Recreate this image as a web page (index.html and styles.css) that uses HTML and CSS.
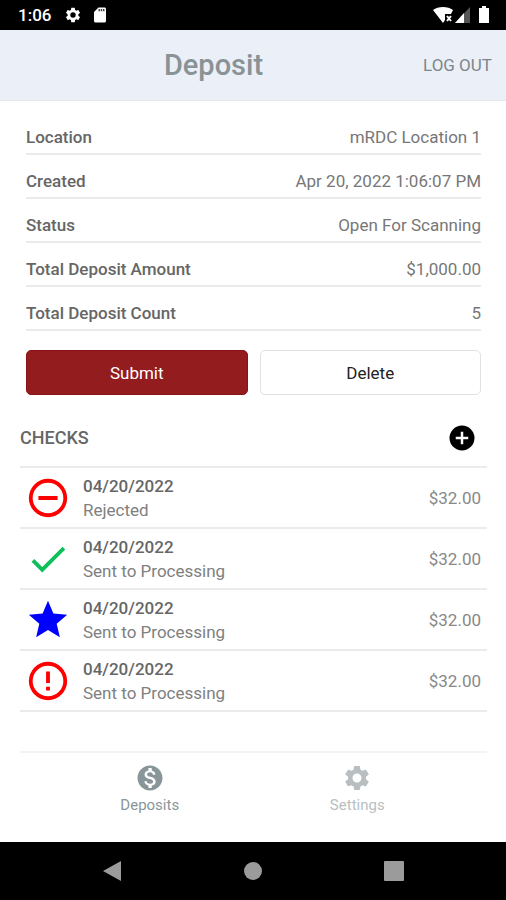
FILE: index.html
```
<!DOCTYPE html>
<html lang="en">
<head>
    <meta charset="UTF-8">
    <meta name="viewport" content="width=device-width, initial-scale=1.0">
    <title>Deposit</title>
    <link rel="stylesheet" href="styles.css">
</head>
<body>
    <div class="status-bar">
        <span class="clock">1:06</span>
        <svg class="gear" width="18" height="18" viewBox="0 0 24 24" fill="currentColor"><path d="M19.14 12.94c.04-.3.06-.61.06-.94 0-.32-.02-.64-.07-.94l2.03-1.58a.49.49 0 0 0 .12-.61l-1.92-3.32a.49.49 0 0 0-.59-.22l-2.39.96c-.5-.38-1.03-.7-1.62-.94l-.36-2.54a.48.48 0 0 0-.48-.41h-3.84c-.24 0-.43.17-.47.41l-.36 2.54c-.59.24-1.13.57-1.62.94l-2.39-.96a.48.48 0 0 0-.59.22L2.74 8.87c-.12.21-.08.47.12.61l2.03 1.58c-.05.3-.09.63-.09.94s.02.64.07.94l-2.03 1.58a.49.49 0 0 0-.12.61l1.92 3.32c.12.22.37.29.59.22l2.39-.96c.5.38 1.03.7 1.62.94l.36 2.54c.05.24.24.41.48.41h3.84c.24 0 .44-.17.47-.41l.36-2.54c.59-.24 1.13-.56 1.62-.94l2.39.96c.22.08.47 0 .59-.22l1.92-3.32a.49.49 0 0 0-.12-.61l-2.01-1.58zM12 15.6a3.6 3.6 0 1 1 0-7.2 3.6 3.6 0 0 1 0 7.2z"/></svg>
        <svg width="18" height="18" viewBox="0 0 24 24"><path fill="#fff" d="M18 2h-8L4 8v12c0 1.1.9 2 2 2h12c1.1 0 2-.9 2-2V4c0-1.1-.9-2-2-2z"/><path fill="#444" d="M10 4h2v3h-2zM13 4h2v3h-2zM16 4h2v3h-2z"/></svg>
        <div class="signals">
            <svg width="20" height="18" viewBox="0 0 20 18"><path fill="#fff" d="M0 4C5 0 15 0 20 4l-2 4h-6v6l-2 3z"/><path stroke="#fff" stroke-width="2" d="M14 10l4 5M18 10l-4 5"/></svg>
            <svg width="17" height="18" viewBox="0 0 17 18"><path fill="#555" d="M16 1v16H1z"/><path fill="#fff" d="M10 7v10H1z"/></svg>
            <svg class="battery" width="12" height="18" viewBox="0 0 12 18"><path fill="#fff" d="M4 0h4v2h3v15H1V2h3z"/></svg>
        </div>
    </div>

    <header class="header">
        <h1>Deposit</h1>
        <a class="logout" href="#">LOG OUT</a>
    </header>

    <main class="content">
        <dl class="details">
            <div class="detail"><dt>Location</dt><dd>mRDC Location 1</dd></div>
            <div class="detail"><dt>Created</dt><dd>Apr 20, 2022 1:06:07 PM</dd></div>
            <div class="detail"><dt>Status</dt><dd>Open For Scanning</dd></div>
            <div class="detail"><dt>Total Deposit Amount</dt><dd>$1,000.00</dd></div>
            <div class="detail"><dt>Total Deposit Count</dt><dd>5</dd></div>
        </dl>

        <div class="actions">
            <button class="btn submit" type="button">Submit</button>
            <button class="btn" type="button">Delete</button>
        </div>

        <div class="checks-head">
            <h2>CHECKS</h2>
            <button type="button" aria-label="Add check">
                <svg width="30" height="30" viewBox="0 0 24 24"><path d="M12 2a10 10 0 1 0 0 20 10 10 0 0 0 0-20zm5 11h-4v4h-2v-4H7v-2h4V7h2v4h4v2z"/></svg>
            </button>
        </div>

        <ul class="checks">
            <li class="check">
                <svg class="rejected" viewBox="0 0 24 24"><path d="M7 11v2h10v-2H7zm5-9a10 10 0 1 0 0 20 10 10 0 0 0 0-20zm0 18a8 8 0 1 1 0-16 8 8 0 0 1 0 16z"/></svg>
                <div class="info">
                    <strong>04/20/2022</strong>
                    <span>Rejected</span>
                </div>
                <span class="amount">$32.00</span>
            </li>
            <li class="check">
                <svg class="accepted" viewBox="0 0 24 24"><path d="M9 16.17L4.83 12l-1.42 1.41L9 19 21 7l-1.41-1.41z"/></svg>
                <div class="info">
                    <strong>04/20/2022</strong>
                    <span>Sent to Processing</span>
                </div>
                <span class="amount">$32.00</span>
            </li>
            <li class="check">
                <svg class="starred" viewBox="0 0 24 24"><path d="M12 17.27L18.18 21l-1.64-7.03L22 9.24l-7.19-.61L12 2 9.19 8.63 2 9.24l5.46 4.73L5.82 21z"/></svg>
                <div class="info">
                    <strong>04/20/2022</strong>
                    <span>Sent to Processing</span>
                </div>
                <span class="amount">$32.00</span>
            </li>
            <li class="check">
                <svg class="rejected" viewBox="0 0 24 24"><path d="M11 15h2v2h-2zm0-8h2v6h-2zm1-5a10 10 0 1 0 0 20 10 10 0 0 0 0-20zm0 18a8 8 0 1 1 0-16 8 8 0 0 1 0 16z"/></svg>
                <div class="info">
                    <strong>04/20/2022</strong>
                    <span>Sent to Processing</span>
                </div>
                <span class="amount">$32.00</span>
            </li>
        </ul>
    </main>

    <nav class="tabs">
        <a class="tab active" href="#">
            <svg width="30" height="30" viewBox="0 0 24 24" fill="currentColor"><path d="M12 2C6.48 2 2 6.48 2 12s4.48 10 10 10 10-4.48 10-10S17.52 2 12 2zm1.41 16.09V20h-2.67v-1.93c-1.71-.36-3.16-1.46-3.27-3.4h1.96c.1 1.05.82 1.87 2.65 1.87 1.96 0 2.4-.98 2.4-1.59 0-.83-.44-1.61-2.67-2.14-2.48-.6-4.18-1.62-4.18-3.67 0-1.72 1.39-2.84 3.11-3.21V4h2.67v1.95c1.86.45 2.79 1.86 2.85 3.39H14.3c-.05-1.11-.64-1.87-2.22-1.87-1.5 0-2.4.68-2.4 1.64 0 .84.65 1.39 2.67 1.91s4.18 1.39 4.18 3.91c-.01 1.83-1.38 2.83-3.12 3.16z"/></svg>
            <span>Deposits</span>
        </a>
        <a class="tab" href="#">
            <svg width="30" height="30" viewBox="0 0 24 24" fill="currentColor"><path d="M19.14 12.94c.04-.3.06-.61.06-.94 0-.32-.02-.64-.07-.94l2.03-1.58a.49.49 0 0 0 .12-.61l-1.92-3.32a.49.49 0 0 0-.59-.22l-2.39.96c-.5-.38-1.03-.7-1.62-.94l-.36-2.54a.48.48 0 0 0-.48-.41h-3.84c-.24 0-.43.17-.47.41l-.36 2.54c-.59.24-1.13.57-1.62.94l-2.39-.96a.48.48 0 0 0-.59.22L2.74 8.87c-.12.21-.08.47.12.61l2.03 1.58c-.05.3-.09.63-.09.94s.02.64.07.94l-2.03 1.58a.49.49 0 0 0-.12.61l1.92 3.32c.12.22.37.29.59.22l2.39-.96c.5.38 1.03.7 1.62.94l.36 2.54c.05.24.24.41.48.41h3.84c.24 0 .44-.17.47-.41l.36-2.54c.59-.24 1.13-.56 1.62-.94l2.39.96c.22.08.47 0 .59-.22l1.92-3.32a.49.49 0 0 0-.12-.61l-2.01-1.58zM12 15.6a3.6 3.6 0 1 1 0-7.2 3.6 3.6 0 0 1 0 7.2z"/></svg>
            <span>Settings</span>
        </a>
    </nav>

    <div class="system-nav">
        <button type="button" aria-label="Back"><svg width="20" height="22" viewBox="0 0 20 22"><path d="M19 1v20L1 11z"/></svg></button>
        <button type="button" aria-label="Home"><svg width="20" height="20" viewBox="0 0 20 20"><circle cx="10" cy="10" r="9"/></svg></button>
        <button type="button" aria-label="Recent apps"><svg width="20" height="20" viewBox="0 0 20 20"><rect width="20" height="20" rx="1"/></svg></button>
    </div>
</body>
</html>
```
FILE: styles.css
```
* {
    box-sizing: border-box;
}
body {
    display: flex;
    flex-direction: column;
    min-height: 100vh;
    margin: 0;
    background-color: #fff;
    color: #666;
    font-family: Roboto, sans-serif;
    font-size: 17px;
    line-height: 24px;
}
h1, h2, dl, dd, ul {
    margin: 0;
    padding: 0;
}
a {
    text-decoration: none;
}
button {
    padding: 0;
    border: none;
    background: none;
    font: inherit;
    cursor: pointer;
}
svg {
    display: block;
}

/* Phone status bar */
.status-bar {
    display: flex;
    align-items: center;
    gap: 9px;
    height: 30px;
    padding: 0 16px 0 18px;
    background-color: #000;
    color: #fff;
}
.clock {
    font-weight: 500;
}
.gear {
    margin-left: 4px;
}
.signals {
    display: flex;
    gap: 1px;
    margin-left: auto;
}
.battery {
    margin-left: 6px;
}

/* Title bar */
.header {
    display: flex;
    align-items: center;
    height: 71px;
    padding: 0 14px 0 4px;
    background-color: #ebeff7;
    border-bottom: 1px solid #e4e6ea;
    color: #899396;
}
.header h1 {
    flex: 1;
    font-size: 29px;
    font-weight: 500;
    line-height: 36px;
    text-align: center;
}
.logout {
    color: #7d878b;
}

.content {
    flex: 1;
    padding: 10px 19px 0 20px;
}
.details, .actions {
    margin: 0 6px;
}
.detail {
    display: flex;
    justify-content: space-between;
    height: 44px;
    padding-top: 14px;
    border-bottom: 2px solid #ebebeb;
}
.detail dt {
    font-weight: 500;
}
.detail dd {
    color: #777;
}
.actions {
    display: flex;
    gap: 12px;
    margin-top: 19px;
}
.btn {
    flex: 1;
    height: 45px;
    border: 1px solid #e2e2e2;
    border-radius: 5px;
    color: #222;
}
.submit {
    border-color: #8b1215;
    background-color: #931c1f;
    color: #fff;
}

/* Checks */
.checks-head {
    display: flex;
    align-items: center;
    justify-content: space-between;
    height: 71px;
    padding: 14px 10px 0 0;
}
.checks-head h2 {
    font-size: 18px;
    font-weight: 500;
}
.checks {
    list-style: none;
    border-top: 2px solid #ebebeb;
}
.check {
    display: flex;
    align-items: center;
    height: 61px;
    padding: 0 6px 0 5px;
    border-bottom: 2px solid #ebebeb;
}
.check svg {
    width: 46px;
    height: 46px;
}
.info {
    display: flex;
    flex: 1;
    flex-direction: column;
    margin-left: 12px;
    color: #808080;
}
.info strong {
    color: #666;
    font-weight: 500;
}
.amount {
    color: #888;
}
.rejected {
    fill: #f00;
}
.accepted {
    fill: #0fbf5b;
}
.starred {
    fill: #00f;
}

/* Bottom tabs */
.tabs {
    display: flex;
    height: 91px;
    margin: 0 19px 0 20px;
    padding: 10px 26px 0;
    border-top: 2px solid #f3f3f3;
}
.tab {
    display: flex;
    flex: 1;
    flex-direction: column;
    align-items: center;
    color: #b9bfc1;
    font-size: 15px;
}
.tab.active {
    color: #899699;
}

/* Phone navigation buttons */
.system-nav {
    display: flex;
    align-items: center;
    height: 58px;
    padding: 0 42px;
    background-color: #000;
}
.system-nav button {
    display: flex;
    flex: 1;
    justify-content: center;
    fill: #9b9b9b;
}
```
